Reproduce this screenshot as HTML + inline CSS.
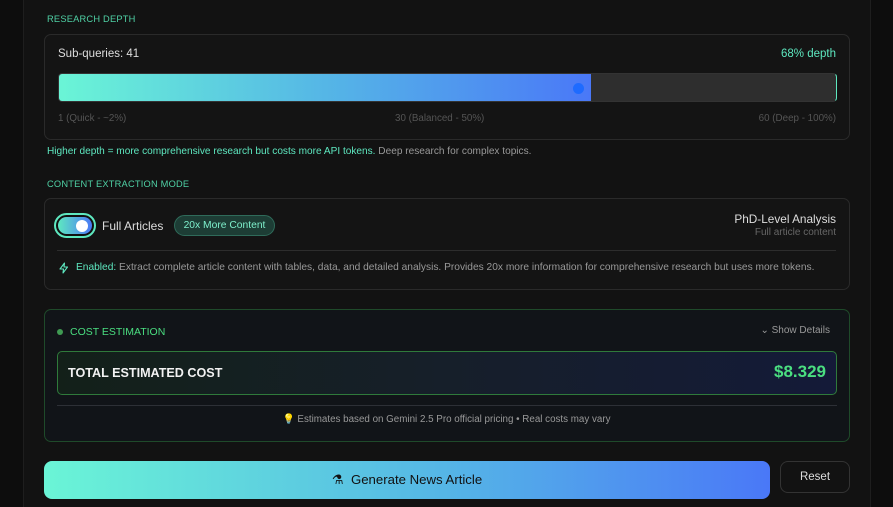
<!DOCTYPE html>
<html><head><meta charset="utf-8"><style>
*{box-sizing:border-box;margin:0;padding:0}
html,body{width:893px;height:507px;overflow:hidden}
body{background:#0d0d0d;font-family:"Liberation Sans",sans-serif;position:relative}
.panel{position:absolute;left:23px;top:-10px;width:848px;height:530px;background:#121212;border-left:1px solid #1e1e1e;border-right:1px solid #1e1e1e}
.abs{position:absolute;white-space:nowrap}
.lbl{font-size:9.3px;color:#4fd1a5;letter-spacing:.2px}
.box{position:absolute;border:1px solid #2a2a2a;border-radius:7px;background:#141414}
</style></head><body>
<div class="panel"></div>
<div class="abs lbl" style="left:47px;top:14px">RESEARCH DEPTH</div>
<div class="box" style="left:44px;top:34px;width:806px;height:106px"></div>
<div class="abs" style="left:58px;top:48px;font-size:11.5px;color:#ddd">Sub-queries: 41</div>
<div class="abs" style="right:57px;top:48px;font-size:11.5px;color:#5ee8c0">68% depth</div>
<div class="abs" style="left:58px;top:73px;width:779px;height:29px;border-radius:4px;background:#2e2e2e;border:1px solid #333;border-right:1px solid #5ee8c0;overflow:hidden">
 <div style="width:532px;height:100%;background:linear-gradient(90deg,#6af5d6,#55b6e6 50%,#4a78f7)"></div>
</div>
<div class="abs" style="left:573px;top:83px;width:11px;height:11px;border-radius:50%;background:#1e6bff"></div>
<div class="abs" style="left:58px;top:113px;font-size:9.8px;color:#555">1 (Quick - ~2%)</div>
<div class="abs" style="left:395px;top:113px;font-size:9.8px;color:#555">30 (Balanced - 50%)</div>
<div class="abs" style="right:57px;top:113px;font-size:9.8px;color:#555">60 (Deep - 100%)</div>
<div class="abs" style="left:47px;top:146px;font-size:10.1px;color:#5ee8c0">Higher depth = more comprehensive research but costs more API tokens. <span style="color:#999">Deep research for complex topics.</span></div>
<div class="abs lbl" style="left:47px;top:179px">CONTENT EXTRACTION MODE</div>
<div class="box" style="left:44px;top:198px;width:806px;height:92px"></div>
<div class="abs" style="left:54px;top:213px;width:42px;height:25px;border-radius:13px;border:2px solid #5ee8c0;padding:2px;background:#111">
 <div style="width:100%;height:100%;border-radius:10px;background:linear-gradient(90deg,#5ee8c0,#4a78f7);position:relative"><div style="position:absolute;right:4px;top:3px;width:12px;height:12px;border-radius:50%;background:#fff"></div></div>
</div>
<div class="abs" style="left:102px;top:219px;font-size:12px;color:#ddd">Full Articles</div>
<div class="abs" style="left:174px;top:215px;width:101px;height:21px;border-radius:11px;background:#1d3d35;border:1px solid #2f6b5a;color:#7ef0cc;font-size:10.3px;text-align:center;line-height:19px">20x More Content</div>
<div class="abs" style="right:57px;top:212px;font-size:11.8px;color:#ddd">PhD-Level Analysis</div>
<div class="abs" style="right:57px;top:227px;font-size:10px;color:#666">Full article content</div>
<div class="abs" style="left:57px;top:250px;width:779px;height:1px;background:#2d2d2d"></div>
<svg class="abs" style="left:58px;top:262px" width="12" height="12" viewBox="0 0 24 24" fill="none" stroke="#5ee8c0" stroke-width="2.2" stroke-linejoin="round"><path d="M13 2 4 14h7l-1 8 9-12h-7z"/></svg>
<div class="abs" style="left:76px;top:262px;font-size:10.2px;color:#999"><span style="color:#5ee8c0">Enabled:</span> Extract complete article content with tables, data, and detailed analysis. Provides 20x more information for comprehensive research but uses more tokens.</div>
<div class="abs" style="left:44px;top:309px;width:806px;height:133px;border:1px solid #1f4a2a;border-radius:7px;background:#111418"></div>
<div class="abs" style="left:57px;top:329px;width:6px;height:6px;border-radius:50%;background:#3f9a52"></div>
<div class="abs" style="left:70px;top:326px;font-size:10.5px;color:#4ade80">COST ESTIMATION</div>
<div class="abs" style="right:63px;top:325px;font-size:10px;color:#999">⌄ Show Details</div>
<div class="abs" style="left:57px;top:351px;width:780px;height:44px;border:1px solid #2f7a3b;border-radius:5px;background:linear-gradient(90deg,#132019,#161f2a 50%,#141a38)"></div>
<div class="abs" style="left:68px;top:366px;font-size:12.6px;font-weight:bold;color:#f2f2f2">TOTAL ESTIMATED COST</div>
<div class="abs" style="right:67px;top:362px;font-size:17px;font-weight:bold;color:#4ade80">$8.329</div>
<div class="abs" style="left:57px;top:405px;width:780px;height:1px;background:#2d3036"></div>
<div class="abs" style="left:0;width:893px;text-align:center;top:414px;font-size:9.8px;color:#999">💡 Estimates based on Gemini 2.5 Pro official pricing • Real costs may vary</div>
<div class="abs" style="left:44px;top:461px;width:726px;height:38px;border-radius:8px;background:linear-gradient(90deg,#6af5d6,#55b6e6 55%,#4a78f7);text-align:center;line-height:38px;font-size:13.2px;color:#111">⚗&nbsp; Generate News Article</div>
<div class="abs" style="left:780px;top:461px;width:70px;height:32px;border-radius:8px;border:1px solid #333;background:#121212;color:#ddd;font-size:11.5px;text-align:center;line-height:30px">Reset</div>
</body></html>
